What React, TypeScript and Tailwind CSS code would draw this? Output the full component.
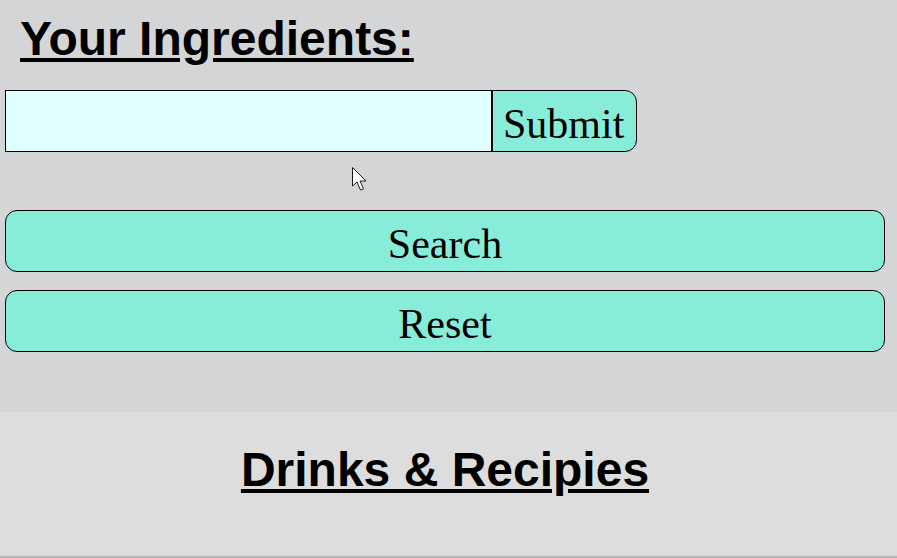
import React, { useState } from "react";

const sans = { fontFamily: '"Liberation Sans", Arial, sans-serif' };
const serif = { fontFamily: '"Liberation Serif", "Times New Roman", serif' };

const App: React.FC = () => {
  const [ingredient, setIngredient] = useState("");
  const [ingredients, setIngredients] = useState<string[]>([]);

  const handleSubmit = (e: React.FormEvent) => {
    e.preventDefault();
    if (!ingredient.trim()) return;
    setIngredients([...ingredients, ingredient.trim()]);
    setIngredient("");
  };

  return (
    <div className="relative min-h-screen bg-[#dcdddc]" style={sans}>
      {/* Ingredients */}
      <section className="bg-[#d4d5d7] pt-[11px] pb-[60px] pl-[5px] pr-[12px]">
        <h1 className="ml-[15px] text-[48px] font-bold leading-[55px] text-black underline">
          Your Ingredients:
        </h1>

        <form onSubmit={handleSubmit} className="mt-[24px] flex">
          <input
            type="text"
            value={ingredient}
            onChange={(e) => setIngredient(e.target.value)}
            className="h-[62px] w-[487px] border border-black bg-[#e0ffff] px-2 text-[24px] outline-none"
          />
          <button
            type="submit"
            className="h-[62px] rounded-r-[12px] border border-black bg-[#88edd8] pl-[10px] pr-[12px] pt-[5px] text-[42px] leading-[48px] text-black"
            style={serif}
          >
            Submit
          </button>
        </form>

        <div className="mt-[58px] flex flex-col gap-[18px]">
          <button
            className="h-[62px] w-full rounded-[12px] border border-black bg-[#88edd8] pt-[5px] text-[42px] leading-[48px] text-black"
            style={serif}
          >
            Search
          </button>
          <button
            onClick={() => setIngredients([])}
            className="h-[62px] w-full rounded-[12px] border border-black bg-[#88edd8] pt-[5px] text-[42px] leading-[48px] text-black"
            style={serif}
          >
            Reset
          </button>
        </div>
      </section>

      {/* Drinks */}
      <section className="h-[146px] border-b-2 border-[#b4b4b4] pl-[5px] pr-[12px] pt-[30px]">
        <h2 className="text-center text-[48px] font-bold leading-[55px] text-black underline">
          Drinks &amp; Recipies
        </h2>
      </section>

      {/* mouse pointer */}
      <svg
        className="absolute left-[352px] top-[167px]"
        width="20"
        height="28"
        viewBox="0 0 20 28"
      >
        <path
          d="M0.5 0.5 L0.5 19 L5 15 L8.5 23 L11.5 21.8 L8 14 L14 14 Z"
          fill="#ffffff"
          stroke="#1a1a1a"
          strokeWidth="1"
          strokeLinejoin="round"
        />
      </svg>
    </div>
  );
};

export default App;
